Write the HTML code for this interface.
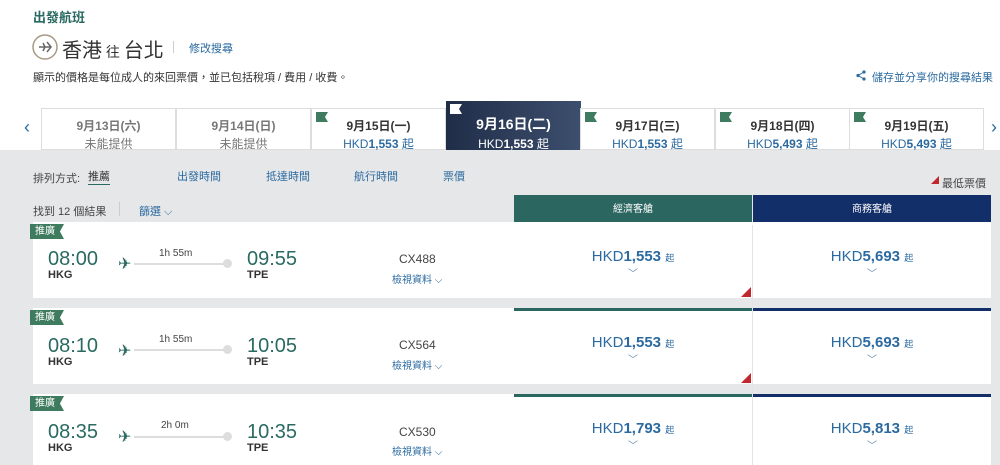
<!DOCTYPE html>
<html><head><meta charset="utf-8"><style>
*{margin:0;padding:0;box-sizing:border-box}
body{width:1000px;height:465px;overflow:hidden;background:#fff;font-family:"Liberation Sans","Noto Sans CJK TC",sans-serif;position:relative;color:#333}
.a{position:absolute}
.gray{left:0;top:150px;width:1000px;height:315px;background:#e6e7e9}
.tab{top:108px;width:135px;height:42px;background:#fff;border:1px solid #ddd;text-align:center;font-size:12px}
.tab .d{margin-top:8px;font-weight:bold;color:#333}
.tab .p{color:#2b6aa0;margin-top:1px}
.tab.na .d{color:#777}.tab.na .p{color:#777}
.flag{position:absolute;left:4px;top:3px;width:12px;height:10px;background:#3e7b5f;clip-path:polygon(0 0,100% 0,75% 50%,100% 100%,0 100%)}
.card{left:33px;width:958px;background:#fff}
.badge{left:30px;width:34px;height:15px;background:#3e7b5f;color:#fff;font-size:10px;line-height:15px;padding-left:5px;clip-path:polygon(0 0,100% 0,88% 50%,100% 100%,0 100%)}
.t{font-size:20px;color:#2a6a62}
.c{font-size:11px;font-weight:bold;color:#333}
.line{height:2px;background:#ddd;width:100px}
.dot{width:9px;height:9px;border-radius:50%;background:#ddd}
.fn{font-size:12px;color:#444}
.vd{font-size:10px;color:#2b6aa0}
.fare{text-align:center;font-size:15px;color:#2b6aa0}
.fare small{font-size:9px}
.chev{font-size:10px;color:#6a8db0}
.tri{width:0;height:0;border-left:10px solid transparent;border-bottom:10px solid #c0282e}
.link{color:#2b6aa0}
</style></head><body>
<div class="a" style="left:33px;top:7px;font-size:13px;font-weight:bold;color:#2a6a62">出發航班</div>
<svg class="a" style="left:32px;top:34px" width="26" height="26" viewBox="0 0 26 26"><circle cx="13" cy="13" r="12" fill="none" stroke="#a89a85" stroke-width="1.5"/><path d="M7 13h12M15 8l4 5-4 5M11 9l2 4-2 4" stroke="#666" stroke-width="1.5" fill="none"/></svg>
<div class="a" style="left:62px;top:34px;font-size:20px;color:#333">香港<span style="font-size:14px"> 往 </span>台北</div>
<div class="a" style="left:173px;top:41px;width:1px;height:12px;background:#ccc"></div>
<div class="a link" style="left:189px;top:40px;font-size:11px">修改搜尋</div>
<div class="a" style="left:33px;top:69px;font-size:11px;color:#333">顯示的價格是每位成人的來回票價，並已包括稅項 / 費用 / 收費。</div>
<svg class="a" style="left:856px;top:70px" width="10" height="11" viewBox="0 0 10 11"><circle cx="8" cy="2" r="1.6" fill="#2b6aa0"/><circle cx="2" cy="5.5" r="1.6" fill="#2b6aa0"/><circle cx="8" cy="9" r="1.6" fill="#2b6aa0"/><path d="M8 2L2 5.5L8 9" stroke="#2b6aa0" fill="none"/></svg>
<div class="a link" style="left:872px;top:69px;font-size:11px">儲存並分享你的搜尋結果</div>
<div class="a gray"></div>
<div class="a" style="left:24px;top:117px;color:#2b6aa0;font-size:18px">‹</div>
<div class="a" style="left:991px;top:117px;color:#2b6aa0;font-size:18px">›</div>
<div class="a tab na" style="left:41px"><div class="d">9月13日(六)</div><div class="p">未能提供</div></div>
<div class="a tab na" style="left:176px"><div class="d">9月14日(日)</div><div class="p">未能提供</div></div>
<div class="a tab" style="left:311px"><div class="flag"></div><div class="d">9月15日(一)</div><div class="p">HKD<b>1,553</b> 起</div></div>
<div class="a tab" style="left:446px;top:101px;height:49px;background:linear-gradient(90deg,#1f2d48,#3d4f6e);border:none;color:#fff"><div class="flag" style="background:#fff"></div><div class="d" style="color:#fff;margin-top:13px;font-size:14px">9月16日(二)</div><div class="p" style="color:#fff">HKD<b>1,553</b> 起</div></div>
<div class="a tab" style="left:580px"><div class="flag"></div><div class="d">9月17日(三)</div><div class="p">HKD<b>1,553</b> 起</div></div>
<div class="a tab" style="left:715px"><div class="flag"></div><div class="d">9月18日(四)</div><div class="p">HKD<b>5,493</b> 起</div></div>
<div class="a tab" style="left:849px"><div class="flag"></div><div class="d">9月19日(五)</div><div class="p">HKD<b>5,493</b> 起</div></div>
<div class="a" style="left:33px;top:170px;font-size:11px;color:#444">排列方式:</div>
<div class="a" style="left:88px;top:168px;font-size:11px;color:#333;border-bottom:1px solid #2a6a62">推薦</div>
<div class="a link" style="left:177px;top:168px;font-size:11px">出發時間</div>
<div class="a link" style="left:266px;top:168px;font-size:11px">抵達時間</div>
<div class="a link" style="left:354px;top:168px;font-size:11px">航行時間</div>
<div class="a link" style="left:443px;top:168px;font-size:11px">票價</div>
<div class="a" style="left:931px;top:176px;width:0;height:0;border-left:8px solid transparent;border-bottom:8px solid #c0282e"></div>
<div class="a" style="left:942px;top:175px;font-size:11px;color:#444">最低票價</div>
<div class="a" style="left:33px;top:203px;font-size:11px;color:#444">找到 12 個結果</div>
<div class="a" style="left:119px;top:202px;width:1px;height:14px;background:#ccc"></div>
<div class="a link" style="left:139px;top:203px;font-size:11px">篩選 ⌵</div>
<div class="a" style="left:514px;top:195px;width:238px;height:30px;background:#2b6660;color:#fff;font-size:10px;text-align:center;line-height:30px">經濟客艙</div>
<div class="a" style="left:753px;top:195px;width:238px;height:30px;background:#132f6a;color:#fff;font-size:10px;text-align:center;line-height:30px">商務客艙</div>

<div class="a card" style="top:222px;height:76px"></div>
<div class="a card" style="top:308px;height:76px"></div>
<div class="a card" style="top:394px;height:71px"></div>
<div class="a" style="left:752px;top:225px;width:1px;height:240px;background:#e3e3e3"></div>
<div class="a" style="left:514px;top:308px;width:238px;height:3px;background:#2b6660"></div>
<div class="a" style="left:753px;top:308px;width:238px;height:3px;background:#132f6a"></div>
<div class="a" style="left:514px;top:394px;width:238px;height:3px;background:#2b6660"></div>
<div class="a" style="left:753px;top:394px;width:238px;height:3px;background:#132f6a"></div>

<div class="a badge" style="top:224px">推廣</div>
<div class="a badge" style="top:310px">推廣</div>
<div class="a badge" style="top:396px">推廣</div>

<div class="a t" style="left:48px;top:248px">08:00</div><div class="a c" style="left:48px;top:269px">HKG</div>
<div class="a t" style="left:48px;top:335px">08:10</div><div class="a c" style="left:48px;top:356px">HKG</div>
<div class="a t" style="left:48px;top:421px">08:35</div><div class="a c" style="left:48px;top:442px">HKG</div>
<div class="a t" style="left:247px;top:248px">09:55</div><div class="a c" style="left:247px;top:269px">TPE</div>
<div class="a t" style="left:247px;top:335px">10:05</div><div class="a c" style="left:247px;top:356px">TPE</div>
<div class="a t" style="left:247px;top:421px">10:35</div><div class="a c" style="left:247px;top:442px">TPE</div>

<div class="a" style="left:118px;top:254px;color:#2a6a62;font-size:16px">✈</div>
<div class="a" style="left:118px;top:341px;color:#2a6a62;font-size:16px">✈</div>
<div class="a" style="left:118px;top:427px;color:#2a6a62;font-size:16px">✈</div>
<div class="a line" style="left:134px;top:263px;width:92px"></div><div class="a dot" style="left:223px;top:259px"></div>
<div class="a line" style="left:134px;top:349px;width:92px"></div><div class="a dot" style="left:223px;top:345px"></div>
<div class="a line" style="left:134px;top:436px;width:92px"></div><div class="a dot" style="left:223px;top:432px"></div>
<div class="a" style="left:159px;top:248px;font-size:10px;color:#444">1h 55m</div>
<div class="a" style="left:159px;top:334px;font-size:10px;color:#444">1h 55m</div>
<div class="a" style="left:161px;top:420px;font-size:10px;color:#444">2h 0m</div>

<div class="a fn" style="left:399px;top:252px">CX488</div><div class="a vd" style="left:392px;top:271px">檢視資料 ⌵</div>
<div class="a fn" style="left:399px;top:338px">CX564</div><div class="a vd" style="left:392px;top:357px">檢視資料 ⌵</div>
<div class="a fn" style="left:399px;top:425px">CX530</div><div class="a vd" style="left:392px;top:443px">檢視資料 ⌵</div>

<div class="a fare" style="left:514px;top:248px;width:238px">HKD<b>1,553</b> <small>起</small><div class="chev">﹀</div></div>
<div class="a fare" style="left:753px;top:248px;width:238px">HKD<b>5,693</b> <small>起</small><div class="chev">﹀</div></div>
<div class="a fare" style="left:514px;top:334px;width:238px">HKD<b>1,553</b> <small>起</small><div class="chev">﹀</div></div>
<div class="a fare" style="left:753px;top:334px;width:238px">HKD<b>5,693</b> <small>起</small><div class="chev">﹀</div></div>
<div class="a fare" style="left:514px;top:420px;width:238px">HKD<b>1,793</b> <small>起</small><div class="chev">﹀</div></div>
<div class="a fare" style="left:753px;top:420px;width:238px">HKD<b>5,813</b> <small>起</small><div class="chev">﹀</div></div>
<div class="a tri" style="left:741px;top:287px"></div>
<div class="a tri" style="left:741px;top:373px"></div>
</body></html>
